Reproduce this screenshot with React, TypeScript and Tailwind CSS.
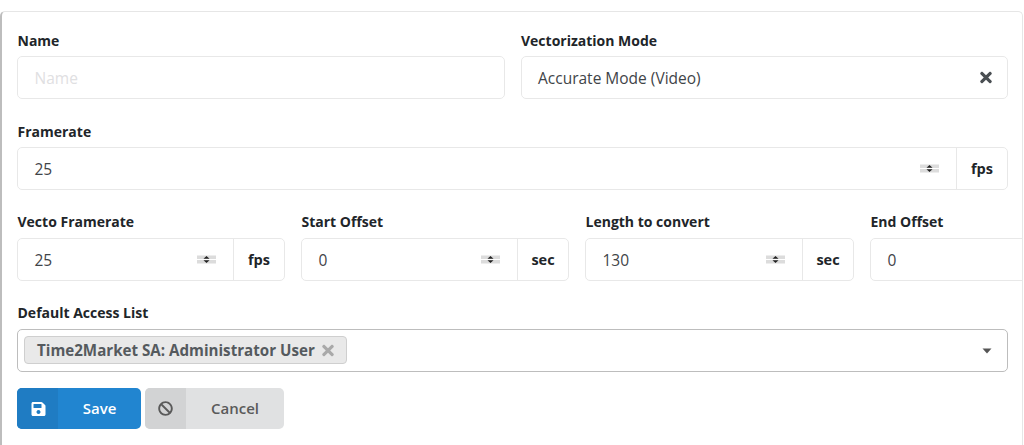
import React from "react";
import { FaTimes, FaSave, FaBan } from "react-icons/fa";

function Spinner() {
  return (
    <svg width="19" height="9" viewBox="0 0 19 9" className="shrink-0">
      <rect x="0" y="0.5" width="19" height="3.5" fill="#dcdcdc" />
      <rect x="0" y="5" width="19" height="3.5" fill="#dcdcdc" />
      <path d="M6.5 3.8 L9.5 1 L12.5 3.8 Z" fill="#222" />
      <path d="M6.5 5.2 L9.5 8 L12.5 5.2 Z" fill="#222" />
    </svg>
  );
}

function Label({ children, wide }: { children: React.ReactNode; wide?: boolean }) {
  return (
    <div
      className={
        wide
          ? "h-[20px] mb-[6px] pl-[0.5px] text-[14px] leading-[20px] font-bold text-[#212529]"
          : "h-[20px] mb-[5px] pl-[0.5px] text-[14px] leading-[20px] font-bold text-[#212529]"
      }
    >
      {children}
    </div>
  );
}

function NumField({ value, unit }: { value: string; unit?: string }) {
  return (
    <div className="flex h-[43px] w-full rounded-[5px] border border-[#e8e8e8] bg-white">
      <div className="flex flex-1 min-w-0 items-center justify-between pl-[16.5px] pr-[17px] text-[15.5px] text-[#3f4448]">
        <span className="pt-[2px]">{value}</span>
        {unit ? <Spinner /> : null}
      </div>
      {unit ? (
        <div className="flex items-center justify-center w-[51px] border-l border-[#e8e8e8] text-[14.5px] font-bold text-[#212529]">
          {unit}
        </div>
      ) : null}
    </div>
  );
}

export default function App() {
  return (
    <div className="h-[445px] w-[1024px] overflow-hidden bg-white pt-[11px] font-['Open_Sans','Noto_Sans',sans-serif]">
      <div className="h-[460px] w-[1023px] overflow-hidden rounded-t-[5px] border-l-2 border-t border-r border-l-[#bdbdbd] border-t-[#e6e6e6] border-r-[#e6e6e6] pl-[15px] pt-[19px]">
        <div className="grid w-[991px] grid-cols-2 gap-x-[16px]">
          <div>
            <Label>Name</Label>
            <div className="flex h-[43px] items-center rounded-[5px] border border-[#e8e8e8] px-[16.5px] pt-[2px] text-[15.5px] text-[#dfe0e2]">
              Name
            </div>
          </div>
          <div>
            <Label>Vectorization Mode</Label>
            <div className="flex h-[43px] items-center justify-between rounded-[5px] border border-[#e8e8e8] pl-[16.5px] pr-[15px] text-[15.5px] text-[#3f4448]">
              <span className="pt-[2px]">Accurate Mode (Video)</span>
              <FaTimes className="h-[17px] w-[12px] text-[#4a4f53]" />
            </div>
          </div>
        </div>

        <div className="mt-[23px] w-[991px]">
          <Label>Framerate</Label>
          <NumField value="25" unit="fps" />
        </div>

        <div className="mt-[22px] grid w-[1121px] grid-cols-[268px_268px_269px_268px] gap-x-[16px]">
          <div>
            <Label wide>Vecto Framerate</Label>
            <NumField value="25" unit="fps" />
          </div>
          <div>
            <Label wide>Start Offset</Label>
            <NumField value="0" unit="sec" />
          </div>
          <div>
            <Label wide>Length to convert</Label>
            <NumField value="130" unit="sec" />
          </div>
          <div>
            <Label wide>End Offset</Label>
            <NumField value="0" unit="sec" />
          </div>
        </div>

        <div className="mt-[22px] w-[991px]">
          <Label wide>Default Access List</Label>
          <div className="flex h-[43px] items-center justify-between rounded-[5px] border border-[#bdbdbd] pl-[6px] pr-[15px]">
            <div className="mb-[2px] flex h-[28px] items-center gap-[7px] rounded-[4px] border border-[#cfcfcf] bg-[#e9e9e9] px-[12px] pt-[1px] text-[15.15px] font-bold text-[#555a5e]">
              <span>Time2Market SA: Administrator User</span>
              <FaTimes className="h-[17px] w-[12px] text-[#a9a9a9]" />
            </div>
            <svg width="10" height="6" viewBox="0 0 10 6">
              <path d="M0.5 0.5 H9.5 L5 5.5 Z" fill="#555" />
            </svg>
          </div>
        </div>

        <div className="mt-[16px] flex gap-[4px]">
          <div className="flex h-[41px] w-[124px] overflow-hidden rounded-[5px] bg-[#2185d0] text-[15px] font-semibold text-white">
            <div className="flex w-[41px] items-center justify-center bg-[#1f7cc3] pl-[1px]">
              <FaSave className="h-[16px] w-[15px] text-white" />
            </div>
            <div className="flex flex-1 items-center justify-center">Save</div>
          </div>
          <div className="flex h-[41px] w-[139px] overflow-hidden rounded-[5px] bg-[#e0e1e2] text-[15px] font-semibold text-[#5a5a5a]">
            <div className="flex w-[41px] items-center justify-center bg-[#d2d3d4]">
              <FaBan className="h-[15px] w-[15px] text-[#5a5a5a]" />
            </div>
            <div className="flex flex-1 items-center justify-center">Cancel</div>
          </div>
        </div>
      </div>
    </div>
  );
}
